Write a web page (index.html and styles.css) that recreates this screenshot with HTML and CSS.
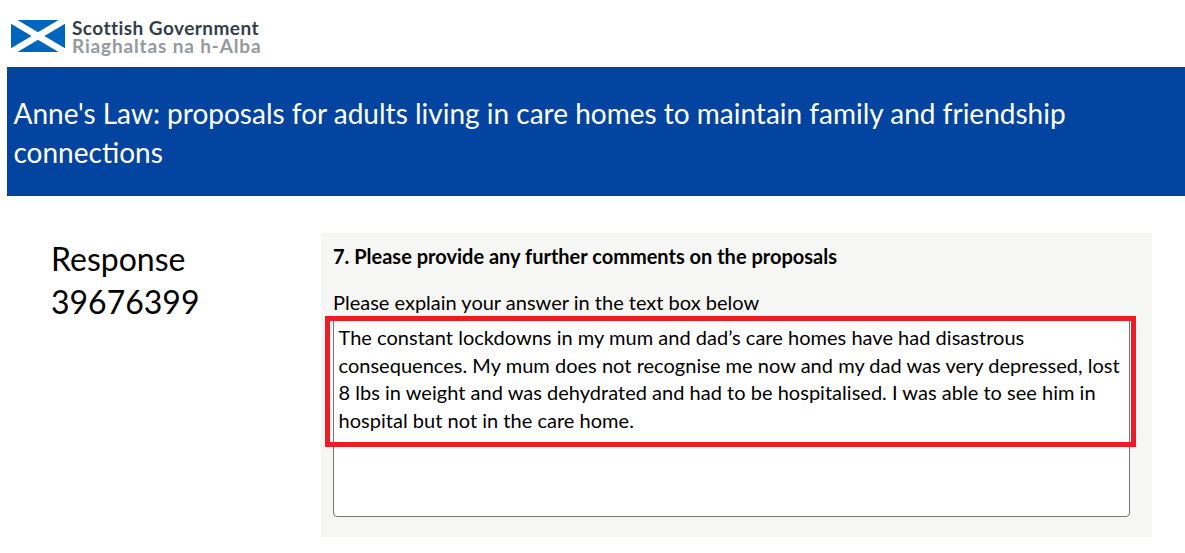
FILE: index.html
```html
<!DOCTYPE html>
<html lang="en">
<head>
    <meta charset="UTF-8">
    <meta name="viewport" content="width=device-width, initial-scale=1.0">
    <title>Anne's Law: Response 39676399</title>
    <link rel="stylesheet" href="styles.css">
</head>
<body>
    <header class="logo">
        <svg class="flag" viewBox="0 0 54 32" preserveAspectRatio="none">
            <rect width="54" height="32" fill="#0065bd"/>
            <path d="M0 0L54 32M54 0L0 32" stroke="#fff" stroke-width="6.6"/>
        </svg>
        <div class="logo-text">
            <span class="english">Scottish Government</span>
            <span class="gaelic">Riaghaltas na h-Alba</span>
        </div>
    </header>

    <div class="banner">
        <h1>Anne's Law: proposals for adults living in care homes to maintain family and friendship connections</h1>
    </div>

    <main class="content">
        <h2>Response 39676399</h2>
        <section class="question">
            <h3>7. Please provide any further comments on the proposals</h3>
            <p class="hint">Please explain your answer in the text box below</p>
            <div class="answer">
                <p>The constant lockdowns in my mum and dad’s care homes have had disastrous<br>
                consequences. My mum does not recognise me now and my dad was very depressed, lost<br>
                8 lbs in weight and was dehydrated and had to be hospitalised. I was able to see him in<br>
                hospital but not in the care home.</p>
                <div class="highlight"></div>
            </div>
        </section>
    </main>
</body>
</html>
```
FILE: styles.css
```css
body {
    font-family: Lato, sans-serif;
    background-color: #fff;
    color: #000;
    margin: 0;
}
h1, h2, h3, p {
    margin: 0;
    font-weight: normal;
}
.logo {
    display: flex;
    height: 67px;
    padding: 20px 0 0 11px;
    box-sizing: border-box;
}
.flag {
    width: 54px;
    height: 32px;
}
.logo-text {
    display: flex;
    flex-direction: column;
    margin-left: 7px;
    font-size: 19px;
    font-weight: bold;
    font-variant-ligatures: none;
    line-height: 18px;
    margin-top: -1px;
    white-space: nowrap;
}
.english {
    color: #333e48;
    letter-spacing: 0.45px;
}
.gaelic {
    color: #9499a0;
    letter-spacing: 0.85px;
}
.banner {
    background-color: #0344a0;
    height: 129px;
    margin-left: 7px;
    padding: 27px 100px 0 6.5px;
    box-sizing: border-box;
}
h1 {
    color: #fff;
    font-size: 28px;
    line-height: 39px;
}
.content {
    display: flex;
    padding: 37px 33px 0 51px;
}
h2 {
    width: 270px;
    padding: 4px 80px 0 0;
    box-sizing: border-box;
    font-size: 32px;
    line-height: 43px;
}
.question {
    flex: 1;
    height: 304px;
    padding: 9px 22px 0 12px;
    background-color: #f6f6f4;
    box-sizing: border-box;
}
h3 {
    font-size: 20px;
    font-weight: bold;
    line-height: 28px;
}
.hint {
    margin: 18px 0 1px;
    font-size: 20px;
    line-height: 28px;
}
.answer {
    position: relative;
    height: 200px;
    padding: 6px 4.5px;
    border: 1px solid #767676;
    border-radius: 4px;
    background-color: #fff;
    box-sizing: border-box;
    font-size: 20px;
    line-height: 27.6px;
    letter-spacing: 0.02px;
    white-space: nowrap;
}
/* red frame over the top of the text box */
.highlight {
    position: absolute;
    top: -2px;
    left: -9px;
    width: 811px;
    height: 131px;
    border: 5px solid #ee1c25;
    box-sizing: border-box;
}
```
